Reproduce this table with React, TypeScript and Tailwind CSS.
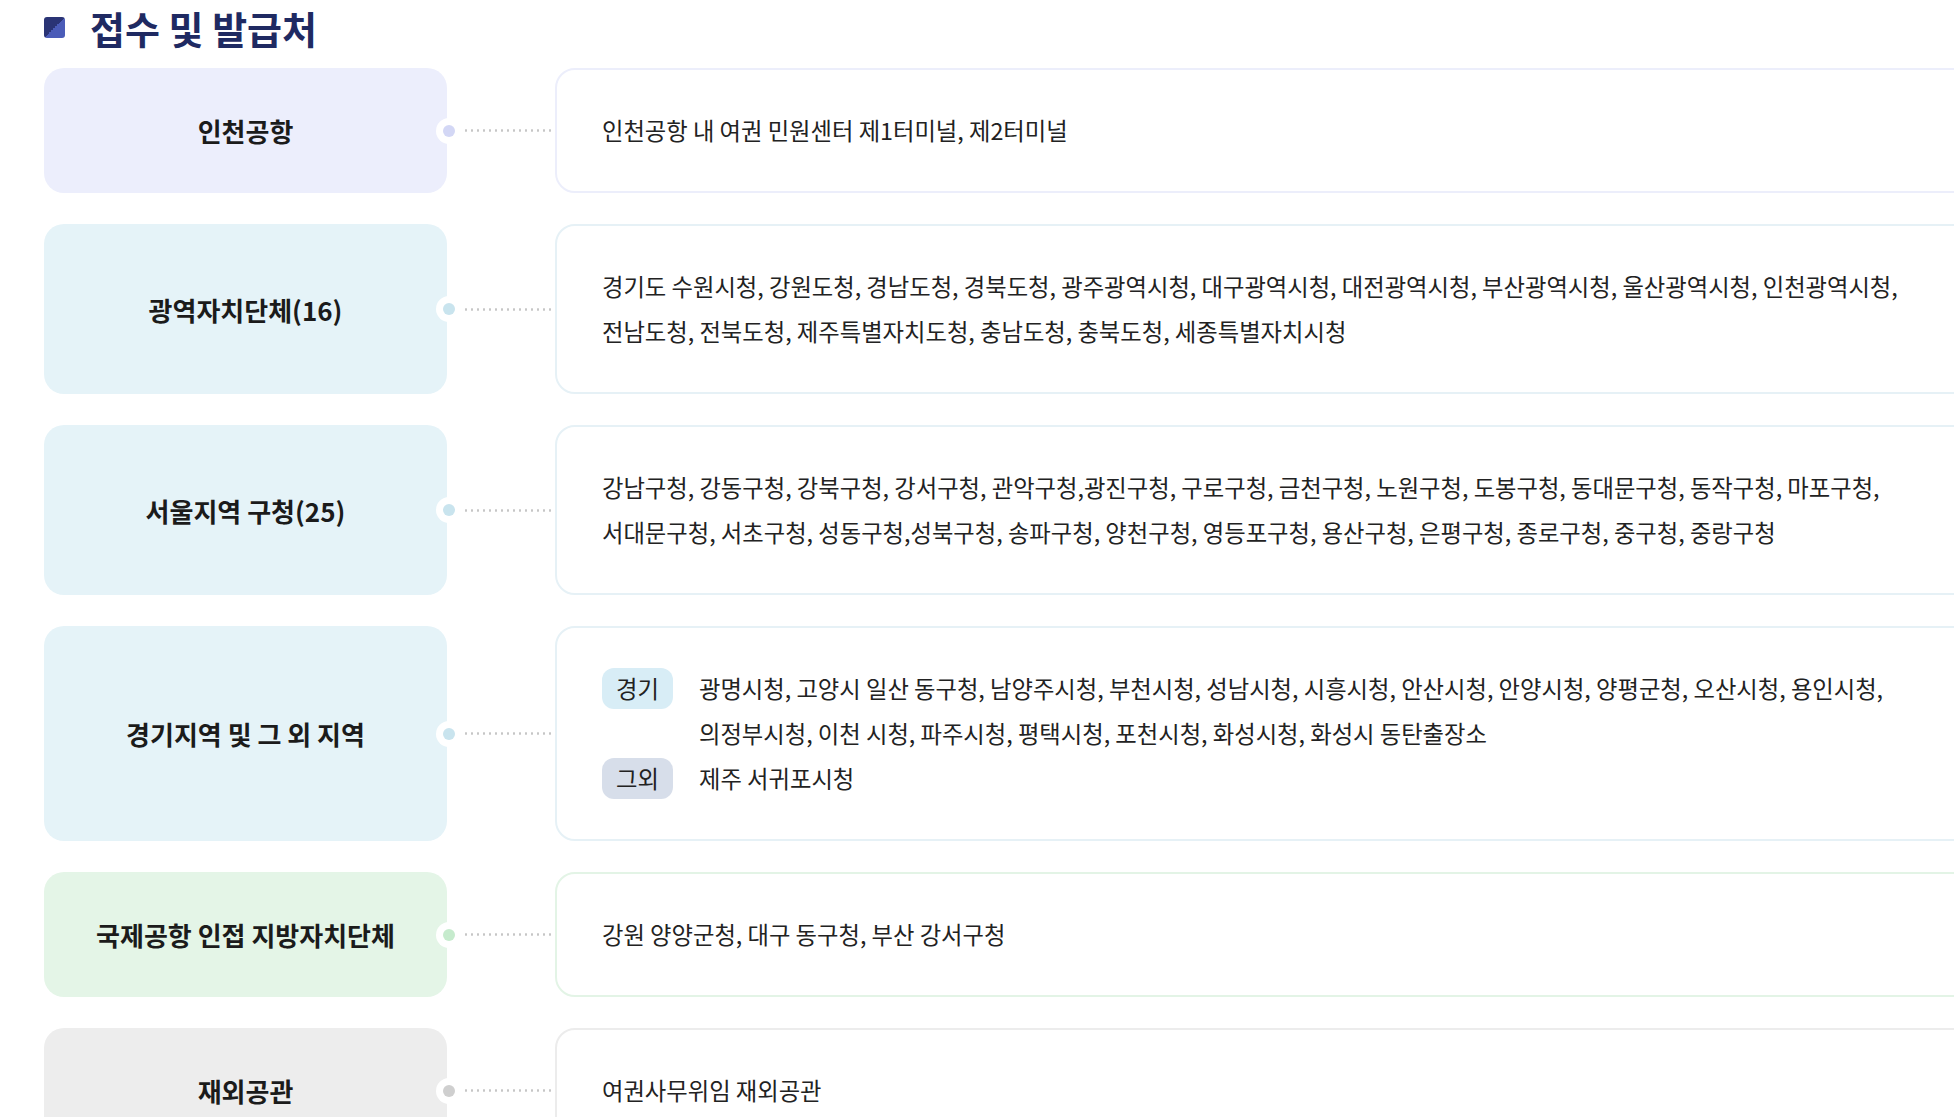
import React from "react";

type Place = {
  label: string;
  tone: "indigo" | "sky" | "green" | "gray";
  lines?: string;
  groups?: { tag: string; tagClass: string; text: string }[];
};

const tones = {
  indigo: { card: "bg-[#eceefc]", dot: "bg-[#d3d7f5]", border: "border-[#eceefb]" },
  sky: { card: "bg-[#e5f3f8]", dot: "bg-[#c9e4ee]", border: "border-[#e6f1f6]" },
  green: { card: "bg-[#e4f5e7]", dot: "bg-[#c6ebcd]", border: "border-[#e3f4e6]" },
  gray: { card: "bg-[#ededed]", dot: "bg-[#cfcfcf]", border: "border-[#ececec]" },
};

const places: Place[] = [
  { label: "인천공항", tone: "indigo", lines: "인천공항 내 여권 민원센터 제1터미널, 제2터미널" },
  {
    label: "광역자치단체(16)",
    tone: "sky",
    lines:
      "경기도 수원시청, 강원도청, 경남도청, 경북도청, 광주광역시청, 대구광역시청, 대전광역시청, 부산광역시청, 울산광역시청, 인천광역시청, 전남도청, 전북도청, 제주특별자치도청, 충남도청, 충북도청, 세종특별자치시청",
  },
  {
    label: "서울지역 구청(25)",
    tone: "sky",
    lines:
      "강남구청, 강동구청, 강북구청, 강서구청, 관악구청,광진구청, 구로구청, 금천구청, 노원구청, 도봉구청, 동대문구청, 동작구청, 마포구청, 서대문구청, 서초구청, 성동구청,성북구청, 송파구청, 양천구청, 영등포구청, 용산구청, 은평구청, 종로구청, 중구청, 중랑구청",
  },
  {
    label: "경기지역 및 그 외 지역",
    tone: "sky",
    groups: [
      {
        tag: "경기",
        tagClass: "bg-[#d8edf6]",
        text: "광명시청, 고양시 일산 동구청, 남양주시청, 부천시청, 성남시청, 시흥시청, 안산시청, 안양시청, 양평군청, 오산시청, 용인시청, 의정부시청, 이천 시청, 파주시청, 평택시청, 포천시청, 화성시청, 화성시 동탄출장소",
      },
      { tag: "그외", tagClass: "bg-[#d7deea]", text: "제주 서귀포시청" },
    ],
  },
  { label: "국제공항 인접 지방자치단체", tone: "green", lines: "강원 양양군청, 대구 동구청, 부산 강서구청" },
  { label: "재외공관", tone: "gray", lines: "여권사무위임 재외공관" },
];

function Row({ place }: { place: Place }) {
  const t = tones[place.tone];
  return (
    <div className="flex items-stretch">
      <div
        className={`w-[403px] shrink-0 rounded-[20px] ${t.card} flex items-center justify-center text-[26px] font-bold text-[#1b1b1b]`}
      >
        {place.label}
      </div>
      <div className="relative w-[108px] shrink-0 flex items-center">
        <div className="absolute left-[-11px] top-1/2 -translate-y-1/2 w-[26px] h-[26px] rounded-full bg-white flex items-center justify-center">
          <div className={`w-[12px] h-[12px] rounded-full ${t.dot}`} />
        </div>
        <div className="ml-[16px] flex-1 h-[3px] bg-[radial-gradient(circle,#c6c6c6_1px,transparent_1.4px)] bg-[length:6px_3px]" />
      </div>
      <div
        className={`flex-1 rounded-[20px] border-2 ${t.border} bg-white pl-[45px] pr-[58px] py-[38px] text-[23.3px] leading-[45px] text-[#222] break-keep`}
      >
        {place.lines && <p>{place.lines}</p>}
        {place.groups &&
          place.groups.map((g) => (
            <div key={g.tag} className="flex items-start gap-[26px]">
              <span
                className={`mt-[2px] w-[71px] h-[41px] shrink-0 rounded-[12px] ${g.tagClass} flex items-center justify-center leading-none`}
              >
                {g.tag}
              </span>
              <p>{g.text}</p>
            </div>
          ))}
      </div>
    </div>
  );
}

export default function App() {
  return (
    <div
      className="w-full overflow-hidden bg-white"
      style={{ fontFamily: '"Noto Sans CJK KR", "Noto Sans", sans-serif' }}
    >
      <div className="w-[2010px] pl-[44px]">
        <div className="h-[55px] flex items-center gap-[25px]">
          <span className="w-[21px] h-[21px] rounded-[3px] bg-[linear-gradient(135deg,#2a3475_50%,#4b5cb8_50%)]" />
          <h2 className="text-[38px] leading-[1.2] font-bold text-[#1f2a62]">접수 및 발급처</h2>
        </div>
        <div className="mt-[13px] flex flex-col gap-[31px] pb-10">
          {places.map((p) => (
            <Row key={p.label} place={p} />
          ))}
        </div>
      </div>
    </div>
  );
}
